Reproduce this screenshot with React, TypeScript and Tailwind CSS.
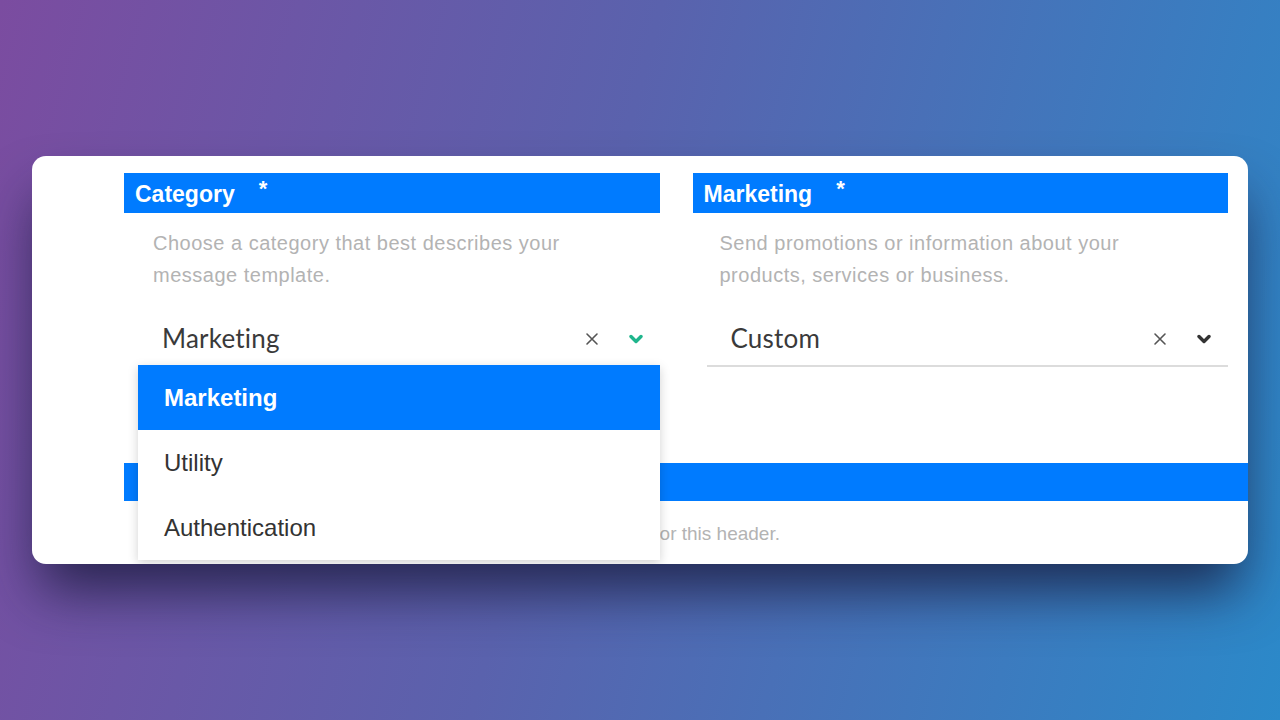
import React from 'react';

const Chevron = ({ color }: { color: string }) => (
  <svg width="14" height="10" viewBox="0 0 14 10" fill="none">
    <path d="M2 2.5 L7 7.5 L12 2.5" stroke={color} strokeWidth="3.4" strokeLinecap="round" strokeLinejoin="round" />
  </svg>
);

const Cross = () => (
  <svg width="14" height="14" viewBox="0 0 14 14" fill="none">
    <path d="M2 2 L12 12 M12 2 L2 12" stroke="#555" strokeWidth="1.6" strokeLinecap="round" />
  </svg>
);

const Header = ({ label }: { label: string }) => (
  <div className="h-10 bg-[#007bff] flex items-center pl-[11px] pt-[3px] text-white font-bold text-[23px] font-['Liberation_Sans',Arial,sans-serif]">
    <span>{label}</span>
    <span className="ml-[24px] -mt-[12px] text-[22px]">*</span>
  </div>
);

const SelectBox = ({ value, chevron, children }: { value: string; chevron: string; children?: React.ReactNode }) => (
  <div className="relative ml-[14px] h-[55px] border-b-2 border-[#dcdcdc] flex items-center pl-[24px]">
    <span className="flex-1 text-[26px] text-[#3a3a3a] font-['Lato',sans-serif] tracking-[0.2px]">{value}</span>
    <div className="flex items-center gap-[30px] pr-[17px]">
      <Cross />
      <Chevron color={chevron} />
    </div>
    {children}
  </div>
);

const options = ['Marketing', 'Utility', 'Authentication'];

export default function App() {
  return (
    <div className="w-[1280px] h-[720px] overflow-hidden bg-[linear-gradient(105deg,#7b4ca0_0%,#5a62ad_45%,#2b89c9_100%)] pt-[156px] px-8">
      <div className="relative h-[408px] bg-white rounded-[14px] overflow-hidden shadow-[0_34px_55px_-8px_rgba(22,24,58,0.8)] font-['Liberation_Sans',Arial,sans-serif]">
        <div className="grid grid-cols-2 gap-[33px] pl-[92px] pr-[20px] pt-[17px]">
          <div>
            <Header label="Category" />
            <p className="mt-[14px] pl-[29px] w-[470px] text-[20px] tracking-[0.5px] leading-[32px] text-[#b3b3b3]">
              Choose a category that best describes your message template.
            </p>
            <div className="mt-[21px]">
              <SelectBox value="Marketing" chevron="#1fb58c">
                <div className="absolute left-0 right-0 top-full z-10 bg-white shadow-[0_3px_10px_rgba(0,0,0,0.18)]">
                  {options.map((o, i) => (
                    <div
                      key={o}
                      className={
                        i === 0
                          ? 'h-[65px] flex items-center pl-[26px] bg-[#007bff] text-white font-bold text-[24px]'
                          : 'h-[65px] flex items-center pl-[26px] text-[#333] text-[24px]'
                      }
                    >
                      {o}
                    </div>
                  ))}
                </div>
              </SelectBox>
            </div>
          </div>
          <div>
            <Header label="Marketing" />
            <p className="mt-[14px] pl-[27px] w-[470px] text-[20px] tracking-[0.5px] leading-[32px] text-[#b3b3b3]">
              Send promotions or information about your products, services or business.
            </p>
            <div className="mt-[21px]">
              <SelectBox value="Custom" chevron="#333" />
            </div>
          </div>
        </div>
        <div className="ml-[92px] mt-[96px] h-[38px] bg-[#007bff]" />
        <p className="mt-[19px] w-[748px] text-right text-[19px] text-[#b3b3b3] whitespace-nowrap">
          Add a title or choose which type of media you'll use for this header.
        </p>
      </div>
    </div>
  );
}
